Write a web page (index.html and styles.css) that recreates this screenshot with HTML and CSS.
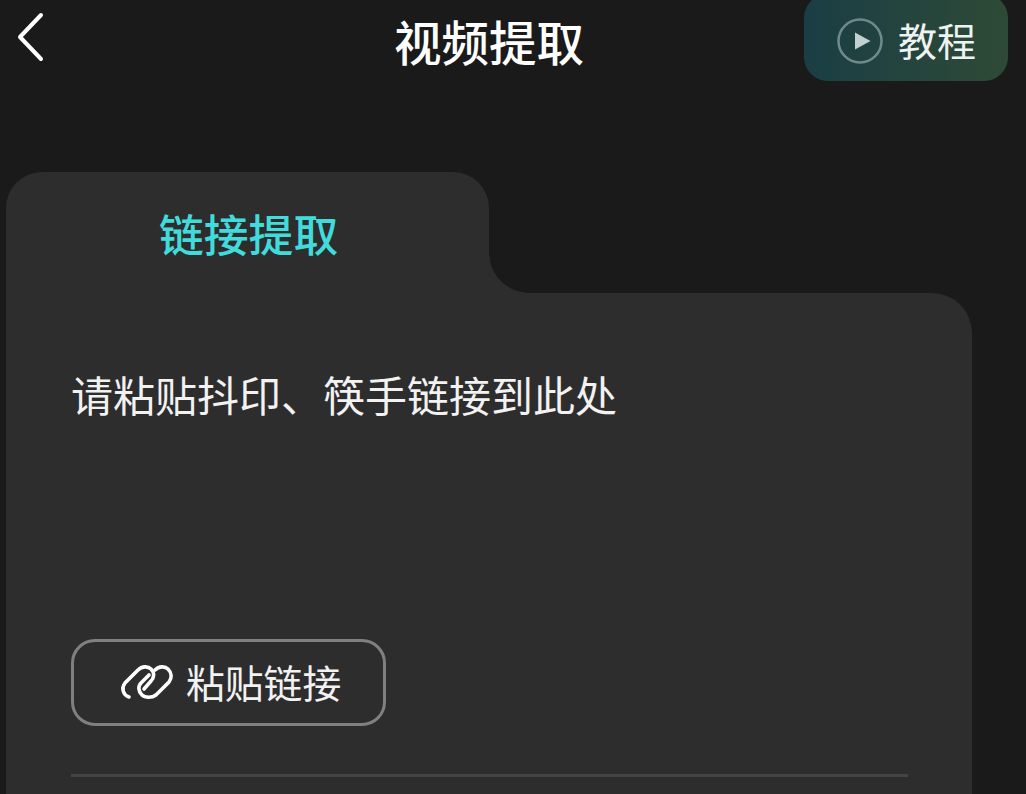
FILE: index.html
```html
<!DOCTYPE html>
<html lang="zh-CN">
<head>
    <meta charset="UTF-8">
    <title>视频提取</title>
    <link rel="stylesheet" href="styles.css">
</head>
<body>

<header>
    <a class="back" href="#">
        <svg width="30" height="50" viewBox="0 0 30 50"><path d="M24 3 L3 25 L24 47" fill="none" stroke="#fff" stroke-width="4" stroke-linecap="round" stroke-linejoin="round"/></svg>
    </a>
    <h1>视频提取</h1>
    <a class="tutorial" href="#">
        <svg width="46" height="46" viewBox="0 0 46 46"><circle cx="23" cy="23" r="21.5" fill="none" stroke="#6f8a8a" stroke-width="2.5"/><path d="M18 14.5 L33.5 23 L18 31.5 Z" fill="#c2d0d0"/></svg>
        <span>教程</span>
    </a>
</header>

<main class="card">
    <div class="tab-row">
        <div class="tab">链接提取</div>
        <div class="tab-corner"></div>
    </div>
    <div class="panel">
        <p class="hint">请粘贴抖印、筷手链接到此处</p>
        <button class="paste-btn" type="button">
            <svg width="62" height="48" viewBox="0 0 62 48"><g fill="none" stroke="#fff" stroke-width="3.6" stroke-linecap="round"><path d="M13 38 C7 36 5 29 9 24 L22 11 C26 7 32 7 35 10 C39 14 38 19 35 22 L28 30"/><path d="M39 11 C43 7 49 7 52 10 C56 14 56 19 53 23 L40 36 C36 39 29 39 26 36 C22 32 22 27 25 24 L33 16"/></g></svg>
            <span>粘贴链接</span>
        </button>
        <div class="divider"></div>
    </div>
</main>

</body>
</html>
```

FILE: styles.css
```css
* {
    margin: 0;
    padding: 0;
    box-sizing: border-box;
    font-family: "Noto Sans CJK SC", "Noto Sans", sans-serif;
}

body {
    background: #1a1a1a;
    color: #fff;
    height: 794px;
    overflow: hidden;
}

header {
    display: flex;
    align-items: flex-start;
    height: 172px;
    padding-left: 17px;
    padding-right: 18px;
}

.back {
    display: flex;
    width: 30px;
    margin-top: 12px;
}

header h1 {
    flex: 1;
    margin-top: 6px;
    margin-left: 347px;
    font-size: 47.5px;
    line-height: 70px;
    font-weight: 500;
    color: #fff;
}

.tutorial {
    display: flex;
    align-items: center;
    gap: 15px;
    width: 204px;
    height: 87px;
    margin-top: -6px;
    padding-left: 33px;
    padding-top: 6px;
    border-radius: 24px;
    background: linear-gradient(to right, #1a3e45, #2e4a36);
    color: #eef2f0;
    font-size: 39px;
    line-height: 52px;
    text-decoration: none;
}

.tutorial span {
    margin-top: -3px;
}

.card {
    margin-left: 6px;
    width: 966px;
}

.tab-row {
    display: flex;
    align-items: flex-end;
    height: 121px;
}

.tab {
    width: 483px;
    height: 121px;
    padding-left: 153px;
    padding-top: 26px;
    background: #2d2d2d;
    border-radius: 36px 36px 0 0;
    color: #41dbdb;
    font-size: 44.8px;
    line-height: 70px;
    font-weight: 500;
}

.tab-corner {
    width: 40px;
    height: 40px;
    background: radial-gradient(circle at 100% 0, #1a1a1a 39.5px, #2d2d2d 40px);
}

.panel {
    background: #2d2d2d;
    border-top-right-radius: 40px;
    height: 501px;
    padding-left: 65px;
    padding-right: 64px;
}

.hint {
    padding-top: 71px;
    font-size: 42px;
    line-height: 60px;
    color: #f2f2f2;
}

.paste-btn {
    display: flex;
    align-items: center;
    gap: 8px;
    width: 315px;
    height: 87px;
    margin-top: 215px;
    padding-left: 42px;
    background: transparent;
    border: 3px solid #808080;
    border-radius: 24px;
    color: #f2f2f2;
    font-size: 38.8px;
    line-height: 52px;
}

.paste-btn span {
    margin-top: -3px;
}

.divider {
    height: 3px;
    margin-top: 48px;
    background: #444444;
}
```
